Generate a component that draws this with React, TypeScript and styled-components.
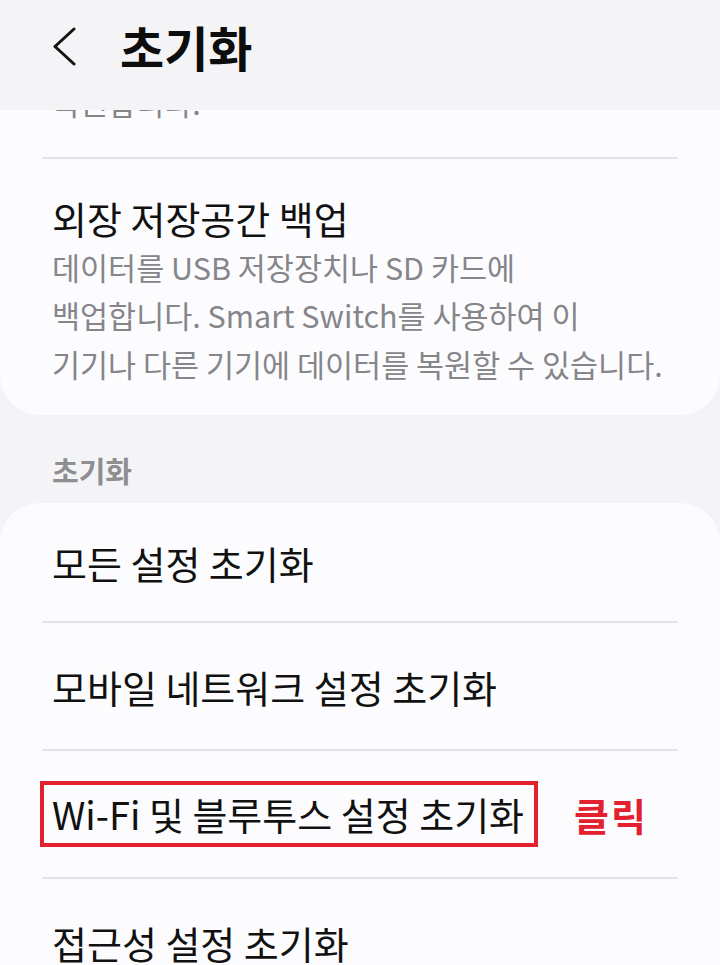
import React from 'react'
import styled, {createGlobalStyle} from 'styled-components'

const GlobalStyle = createGlobalStyle`
  html, body {
    margin: 0;
    padding: 0;
    background: #f4f4f6;
  }

  body {
    font-family: "Noto Sans CJK KR", "Noto Sans", "Liberation Sans", sans-serif;
    -webkit-font-smoothing: antialiased;
  }
`

const Screen = styled.div`
  width: 720px;
  height: 965px;
  display: flex;
  flex-direction: column;
  background: #f4f4f6;
  overflow: hidden;
`

const Header = styled.header`
  height: 110px;
  flex: none;
  display: flex;
  align-items: center;
  padding: 0 0 18px 50px;
  box-sizing: border-box;
  gap: 40px;
  background: #f4f4f6;
`

const BackButton = styled.button`
  width: 30px;
  height: 42px;
  padding: 0;
  border: 0;
  background: none;
  display: flex;
  align-items: center;
  justify-content: center;
  color: #111;
`

const Title = styled.h1`
  margin: 0;
  font-size: 48px;
  line-height: 56px;
  font-weight: 700;
  color: #0d0d0d;
`

const Scroller = styled.main`
  flex: 1;
  overflow: hidden;
  display: flex;
  flex-direction: column;
`

const Card = styled.section<{$top?: boolean; $bottom?: boolean}>`
  background: #fcfcfe;
  padding: 0 42px;
  border-radius: ${(p) => (p.$top ? '40px 40px' : '0 0')} ${(p) => (p.$bottom ? '40px 40px' : '0 0')};
  flex: none;
`

const Divider = styled.hr`
  margin: 0;
  border: 0;
  height: 2px;
  background: #e2e2e6;
`

const Item = styled.div<{$padTop?: number; $padBottom?: number}>`
  padding: ${(p) => p.$padTop ?? 0}px 10px ${(p) => p.$padBottom ?? 0}px;
`

const ItemTitle = styled.div`
  font-size: 38px;
  line-height: 50px;
  color: #111;
`

// the first line sits partly under the header, as the list is scrolled
const ItemDesc = styled.div<{$clipped?: boolean}>`
  font-size: 30.5px;
  line-height: 48.5px;
  color: #85858a;
  margin-top: ${(p) => (p.$clipped ? '-32px' : '0')};
`

const SectionLabel = styled.div`
  padding: 34px 52px 12px;
  font-size: 29px;
  line-height: 42px;
  font-weight: 700;
  color: #8d8d92;
`

const Row = styled.div<{$height: number}>`
  height: ${(p) => p.$height}px;
  display: flex;
  align-items: center;
  padding: 0 10px;
  font-size: 38px;
  color: #111;
`

const Highlight = styled.span`
  margin-left: -12px;
  padding: 4px 10px 4px 8px;
  border: 4px solid #e3202e;
  line-height: 50px;
`

const ClickTag = styled.span`
  margin-left: 36px;
  color: #e3202e;
  font-weight: 700;
  font-size: 38px;
  letter-spacing: 2px;
`

const resetRows = [
  {label: '모든 설정 초기화', height: 118},
  {label: '모바일 네트워크 설정 초기화', height: 126},
  {label: 'Wi-Fi 및 블루투스 설정 초기화', height: 126, marked: true},
  {label: '접근성 설정 초기화', height: 126},
]

const App: React.FC = () => {
  return (
    <>
      <GlobalStyle />
      <Screen>
        <Header>
          <BackButton aria-label="뒤로">
            <svg width="26" height="40" viewBox="0 0 26 40" fill="none">
              <polyline
                points="22,3 3,20.5 22,38"
                stroke="currentColor"
                strokeWidth="3"
                strokeLinecap="round"
                strokeLinejoin="round"
              />
            </svg>
          </BackButton>
          <Title>초기화</Title>
        </Header>

        <Scroller>
          <Card $bottom>
            <Item $padBottom={30}>
              <ItemDesc $clipped>복원합니다.</ItemDesc>
            </Item>
            <Divider />
            <Item $padTop={34} $padBottom={27}>
              <ItemTitle>외장 저장공간 백업</ItemTitle>
              <ItemDesc>
                데이터를 USB 저장장치나 SD 카드에
                <br />
                백업합니다. Smart Switch를 사용하여 이
                <br />
                기기나 다른 기기에 데이터를 복원할 수 있습니다.
              </ItemDesc>
            </Item>
          </Card>

          <SectionLabel>초기화</SectionLabel>

          <Card $top>
            {resetRows.map((row, i) => (
              <React.Fragment key={row.label}>
                {i > 0 && <Divider />}
                <Row $height={row.height}>
                  {row.marked ? (
                    <>
                      <Highlight>{row.label}</Highlight>
                      <ClickTag>클릭</ClickTag>
                    </>
                  ) : (
                    row.label
                  )}
                </Row>
              </React.Fragment>
            ))}
          </Card>
        </Scroller>
      </Screen>
    </>
  )
}

export default App
